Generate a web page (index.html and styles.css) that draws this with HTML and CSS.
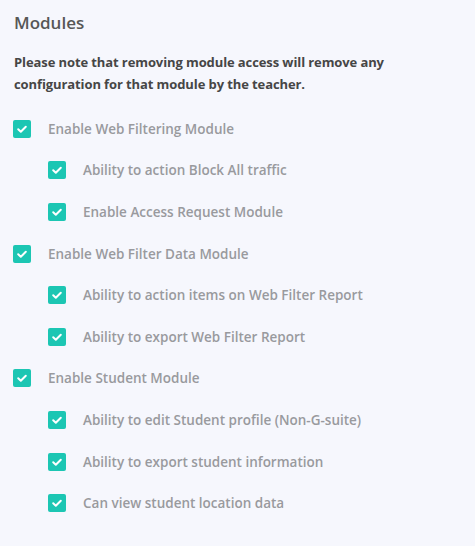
FILE: index.html
```html
<!DOCTYPE html>
<html lang="en">
<head>
  <meta charset="UTF-8">
  <meta name="viewport" content="width=device-width, initial-scale=1">
  <title>Modules</title>
  <link rel="stylesheet" href="styles.css">
</head>
<body>

  <section class="modules">
    <h2>Modules</h2>
    <p class="note">Please note that removing module access will remove any configuration for that module by the teacher.</p>

    <ul class="module-list" id="module-list">
      <!-- filled by script -->
    </ul>
  </section>

  <script>
    const modules = [
      ["Enable Web Filtering Module", ["Ability to action Block All traffic", "Enable Access Request Module"]],
      ["Enable Web Filter Data Module", ["Ability to action items on Web Filter Report", "Ability to export Web Filter Report"]],
      ["Enable Student Module", ["Ability to edit Student profile (Non-G-suite)", "Ability to export student information", "Can view student location data"]]
    ];

    const list = document.getElementById("module-list");

    const makeRow = (label, sub) => {
      const li = document.createElement("li");
      li.className = sub ? "row sub" : "row";
      li.innerHTML = `<label><input type="checkbox" checked><span class="box"><svg viewBox="0 0 18 18"><path d="M5.2 9.3l2.6 2.5 5-5" /></svg></span><span class="text">${label}</span></label>`;
      list.appendChild(li);
    };

    modules.forEach(([name, children]) => {
      makeRow(name, false);
      children.forEach(c => makeRow(c, true));
    });
  </script>

</body>
</html>
```

FILE: styles.css
```css
body {
  font-family: 'Open Sans', 'Noto Sans', sans-serif;
  background: #f6f7fd;
  margin: 0;
  padding: 0 14px;
  color: #444;
}

h2 {
  margin: 0;
  padding-top: 11px;
  font-size: 17px;
  font-weight: 600;
  line-height: 24px;
  color: #575757;
}

.note {
  max-width: 385px;
  margin: 16px 0 0;
  font-size: 13px;
  font-weight: 700;
  line-height: 22px;
  letter-spacing: -0.1px;
  color: #464646;
}

.module-list {
  list-style: none;
  margin: 13px 0 0;
  padding: 0;
}

.row {
  height: 41.6px;
  display: flex;
  align-items: center;
}

.row.sub {
  padding-left: 35px;
}

.row label {
  display: flex;
  align-items: center;
  cursor: pointer;
}

.row input {
  display: none;
}

.box {
  width: 18px;
  height: 18px;
  border-radius: 2px;
  background: #1cc6b3;
  display: flex;
  margin-left: -1px;
}

.box svg {
  width: 18px;
  height: 18px;
  fill: none;
  stroke: #fff;
  stroke-width: 2;
  stroke-linecap: round;
  stroke-linejoin: round;
}

.text {
  margin-left: 17px;
  font-size: 13.5px;
  font-weight: 600;
  color: #999a9e;
}
```
